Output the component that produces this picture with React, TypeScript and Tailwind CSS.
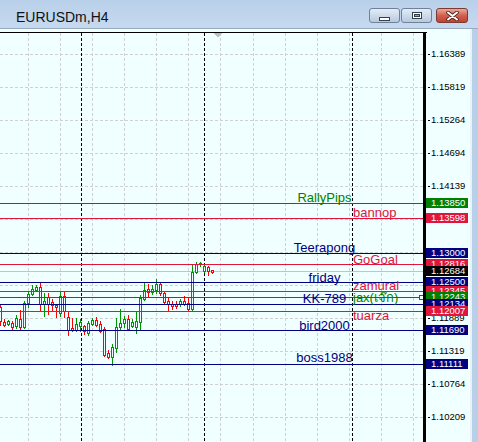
import React from 'react';

// chart area starts at page y = 29, svg viewBox keeps page coordinates
const TOP = 29;
const BG = '#f0ffff';

const GRID_X = [28, 60, 92, 124, 156, 188, 220, 253, 285, 317, 349, 381, 413];
const SEPARATORS = [81, 204, 352];

const GRID_Y: [number, string][] = [
  [54, '1.16389'],
  [87, '1.15819'],
  [120, '1.15264'],
  [153, '1.14694'],
  [186, '1.14139'],
  [219, '1.13569'],
  [252, '1.13014'],
  [285, '1.12444'],
  [318, '1.11889'],
  [351, '1.11319'],
  [384, '1.10764'],
  [417, '1.10209'],
];

type HLine = {
  y: number;
  price: string;
  color: string;
  name?: string;
  base?: number; // baseline of the name text
  align?: 'center' | 'left';
};

const GREEN = '#008000';
const RED = '#e0143c';
const NAVY = '#000080';

const LINES: HLine[] = [
  { y: 203, price: '1.13850', color: GREEN, name: 'RallyPips', base: 201.5, align: 'center' },
  { y: 218, price: '1.13598', color: RED, name: 'bannop', base: 217, align: 'left' },
  { y: 253, price: '1.13000', color: NAVY, name: 'Teerapong', base: 252, align: 'center' },
  { y: 264, price: '1.12816', color: RED, name: 'GoGoal', base: 264, align: 'left' },
  { y: 271, price: '1.12684', color: '#000000' },
  { y: 282, price: '1.12500', color: NAVY, name: 'friday', base: 282, align: 'center' },
  { y: 291, price: '1.12345', color: RED, name: 'zamural', base: 290, align: 'left' },
  { y: 297, price: '1.12243', color: GREEN, name: 'jax(เจ๊ก)', base: 302, align: 'left' },
  { y: 304, price: '1.12134', color: NAVY, name: 'KK-789', base: 303, align: 'center' },
  { y: 311, price: '1.12007', color: RED, name: 'tuarza', base: 320, align: 'left' },
  { y: 330, price: '1.11690', color: NAVY, name: 'bird2000', base: 330, align: 'center' },
  { y: 364, price: '1.11111', color: NAVY, name: 'boss1988', base: 362, align: 'center' },
];

// [bull, bodyTop, bodyBottom, high, low] in page pixels, bar i sits at x = 4 * i
const CANDLES: [boolean, number, number, number, number][] = [
  [false, 307, 321, 305, 325],
  [false, 322, 325, 319, 326],
  [true, 321, 324, 320, 325],
  [false, 323, 327, 321, 330],
  [true, 318, 326, 315, 328],
  [false, 319, 327, 310, 330],
  [true, 303, 327, 301, 328],
  [true, 294, 303, 292, 307],
  [true, 289, 294, 285, 295],
  [true, 287, 290, 285, 291],
  [false, 287, 304, 283, 310],
  [true, 301, 304, 293, 316],
  [false, 297, 304, 293, 314],
  [false, 302, 305, 299, 310],
  [false, 305, 307, 304, 317],
  [true, 296, 313, 291, 316],
  [false, 296, 311, 291, 317],
  [false, 317, 330, 311, 335],
  [false, 328, 330, 318, 331],
  [true, 324, 330, 318, 331],
  [true, 322, 326, 319, 331],
  [false, 326, 331, 325, 334],
  [true, 323, 333, 321, 335],
  [true, 320, 324, 318, 325],
  [false, 320, 325, 317, 326],
  [false, 324, 331, 321, 332],
  [false, 329, 355, 327, 356],
  [false, 353, 357, 350, 358],
  [true, 347, 357, 344, 365],
  [true, 327, 348, 318, 352],
  [true, 323, 327, 309, 330],
  [true, 319, 323, 316, 327],
  [false, 319, 329, 315, 330],
  [true, 322, 326, 319, 327],
  [true, 321, 327, 312, 333],
  [true, 298, 322, 295, 330],
  [true, 290, 299, 282, 300],
  [false, 289, 292, 284, 297],
  [true, 289, 292, 285, 294],
  [true, 284, 290, 279, 293],
  [false, 284, 293, 283, 295],
  [false, 293, 302, 291, 304],
  [false, 301, 304, 297, 311],
  [false, 304, 306, 301, 309],
  [false, 304, 306, 301, 308],
  [true, 301, 304, 299, 306],
  [false, 301, 304, 296, 305],
  [false, 303, 309, 298, 310],
  [true, 272, 309, 264, 310],
  [true, 264, 272, 262, 273],
  [true, 263, 264, 262, 266],
  [true, 266, 271, 264, 272],
  [false, 267, 271, 266, 275],
  [false, 270, 272, 270, 273],
];

const TitleButton: React.FC<{ kind: 'min' | 'max' | 'close' }> = ({ kind }) => {
  if (kind === 'close') {
    return (
      <div className="w-[32px] h-[15px] rounded-[3px] border border-[#7d3a32] bg-linear-to-b from-[#e9a999] via-[#d0604f] to-[#c2402f] flex items-center justify-center">
        <svg width="13" height="10" viewBox="0 0 13 10">
          <path d="M2 1.5 L11 8.5 M11 1.5 L2 8.5" stroke="#4a2320" strokeWidth="3.6" strokeLinecap="round" />
          <path d="M2 1.5 L11 8.5 M11 1.5 L2 8.5" stroke="#ffffff" strokeWidth="2" strokeLinecap="round" />
        </svg>
      </div>
    );
  }
  return (
    <div className="w-[31px] h-[15px] rounded-[3px] border border-[#6e8199] bg-linear-to-b from-[#e4ecf6] to-[#b6c9df] flex items-center justify-center">
      {kind === 'min' ? (
        <svg width="11" height="4" viewBox="0 0 11 4" className="mt-[6px]">
          <rect x="0.5" y="0.5" width="10" height="3" fill="#ffffff" stroke="#34404e" />
        </svg>
      ) : (
        <svg width="10" height="7" viewBox="0 0 10 7" className="mb-[1px]">
          <rect x="0.5" y="0.5" width="9" height="6" fill="none" stroke="#34404e" />
          <rect x="1.5" y="1.5" width="7" height="4" fill="none" stroke="#ffffff" />
          <rect x="2.5" y="2.5" width="5" height="2" fill="#8fa3ba" stroke="#34404e" />
        </svg>
      )}
    </div>
  );
};

const ChartDrawing: React.FC = () => (
  <svg width="470" height="413" viewBox={`0 ${TOP} 470 413`} shapeRendering="crispEdges" className="absolute left-0 top-0">
    <rect x="0" y={TOP} width="470" height="413" fill={BG} />

    {/* grid */}
    {GRID_X.map((x) => (
      <line key={`gx${x}`} x1={x + 0.5} y1="33" x2={x + 0.5} y2="442" stroke="#d0d0d0" strokeDasharray="3 2" />
    ))}
    {GRID_Y.map(([y]) => (
      <line key={`gy${y}`} x1="0" y1={y + 0.5} x2="423" y2={y + 0.5} stroke="#d0d0d0" strokeDasharray="3 2" />
    ))}

    {/* period separators */}
    {SEPARATORS.map((x) => (
      <line key={`sp${x}`} x1={x + 0.5} y1="33" x2={x + 0.5} y2="442" stroke="#000000" strokeDasharray="3 2" />
    ))}

    {/* bid line */}
    <line x1="0" y1="271.5" x2="423" y2="271.5" stroke="#c4c4c4" />

    {/* candles */}
    {CANDLES.map(([bull, o, c, h, lo], i) => {
      const x = i * 4;
      const col = bull ? '#009400' : '#ff0000';
      return (
        <g key={`c${i}`}>
          <line x1={x + 0.5} y1={h} x2={x + 0.5} y2={lo + 1} stroke={col} />
          <rect x={x - 0.5} y={o + 0.5} width="2" height={Math.max(c - o, 1)} fill={BG} stroke={col} />
        </g>
      );
    })}

    {/* horizontal objects */}
    {LINES.filter((l) => l.name).map((l) => (
      <rect key={`hl${l.y}`} x="0" y={l.y} width="423" height="1" fill={l.color} />
    ))}
    <rect x="419.5" y="295.5" width="4" height="4" fill={BG} stroke={GREEN} />

    {/* shift marker */}
    <polygon points="213,33 222,33 217.5,37.5" fill="#bdbdbd" />

    {/* frame and price axis */}
    <rect x="0" y="32" width="427" height="1" fill="#000000" />
    <rect x="423" y="33" width="3" height="409" fill="#000000" />
    {GRID_Y.map(([y]) => (
      <rect key={`tk${y}`} x="428" y={y} width="2" height="1" fill="#000000" />
    ))}
  </svg>
);

export default function App() {
  return (
    <div className="w-[478px] h-[442px] overflow-hidden flex flex-col bg-[#bfd4ec] font-['Liberation_Sans','Noto_Sans',sans-serif]">
      {/* title bar */}
      <div className="h-[29px] shrink-0 flex bg-linear-to-b from-[#b9d0ea] to-[#c6daef] border-b border-[#9aabc0]">
        <div className="pl-[16px] pt-[10px] text-[14px] leading-[14px] text-[#111111]">EURUSDm,H4</div>
        <div className="ml-auto mr-[10px] pt-[8px] flex items-start">
          <TitleButton kind="min" />
          <div className="ml-[1px]">
            <TitleButton kind="max" />
          </div>
          <div className="ml-[4px]">
            <TitleButton kind="close" />
          </div>
        </div>
      </div>

      <div className="flex h-[413px]">
        {/* chart */}
        <div className="relative w-[470px] h-[413px] overflow-hidden">
          <ChartDrawing />

          {/* object names */}
          {LINES.filter((l) => l.name).map((l) => (
            <div
              key={`nm${l.y}`}
              className={
                l.align === 'center'
                  ? 'absolute left-[224px] w-[201px] text-center text-[13px] leading-[13px] whitespace-nowrap'
                  : 'absolute left-[353px] text-[13px] leading-[13px] whitespace-nowrap'
              }
              style={{ top: (l.base as number) - 11 - TOP, color: l.color }}
            >
              {l.name}
            </div>
          ))}

          {/* price scale */}
          {GRID_Y.map(([y, p]) => (
            <div
              key={`pl${y}`}
              className="absolute left-[431px] text-[9.5px] leading-[10px] text-black"
              style={{ top: y - 5 - TOP }}
            >
              {p}
            </div>
          ))}
          {LINES.map((l) => (
            <div
              key={`pb${l.y}`}
              className="absolute left-[426px] w-[42px] h-[10px] pl-[5px] text-[9.5px] leading-[10px] text-white overflow-hidden"
              style={{ top: l.y - 5 - TOP, backgroundColor: l.color }}
            >
              {l.price}
            </div>
          ))}
        </div>

        {/* window frame */}
        <div className="w-[2px] bg-[#eaf1f9]" />
        <div className="flex-1 bg-[#b8cfe8]" />
      </div>
    </div>
  );
}
